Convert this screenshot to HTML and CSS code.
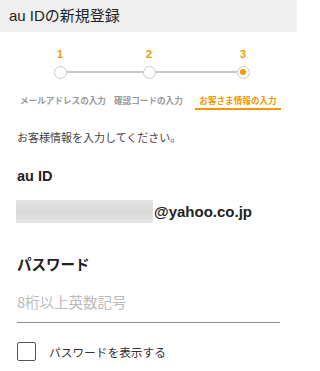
FILE: index.html
```html
<!DOCTYPE html>
<html lang="ja">
<head>
<meta charset="utf-8">
<link rel="stylesheet" href="styles.css">
</head>
<body>
<div class="page">
  <header class="hdr">au IDの新規登録</header>
  <div class="steps">
    <div class="nums">
      <span class="num n1">1</span>
      <span class="num n2">2</span>
      <span class="num n3">3</span>
    </div>
    <div class="track">
      <span class="dot d1"></span>
      <span class="line l1"></span>
      <span class="dot d2"></span>
      <span class="line l2"></span>
      <span class="dot d3 on"></span>
    </div>
    <div class="labels">
      <span class="lab lab1">メールアドレスの入力</span>
      <span class="lab lab2">確認コードの入力</span>
      <span class="lab lab3 act">お客さま情報の入力</span>
    </div>
  </div>
  <p class="intro">お客様情報を入力してください。</p>
  <h2 class="label au">au ID</h2>
  <div class="idrow">
    <span class="blur"></span>
    <span class="domain">@yahoo.co.jp</span>
  </div>
  <h2 class="label pw">パスワード</h2>
  <div class="field">8桁以上英数記号</div>
  <label class="chk"><span class="box"></span><span class="chktext">パスワードを表示する</span></label>
</div>
</body>
</html>
```

FILE: styles.css
```css
* { box-sizing: border-box; margin: 0; padding: 0; }
body {
  margin: 0;
  background: #fff;
  font-family: "Noto Sans CJK JP", "Liberation Sans", sans-serif;
  color: #222;
  width: 299px;
  height: 371px;
  overflow: hidden;
}
.page { width: 299px; }
.hdr {
  width: 297px;
  height: 32px;
  background: #efefef;
  font-family: "Liberation Sans", "Noto Sans CJK JP", sans-serif;
  font-size: 15px;
  line-height: 32px;
  padding-left: 9px;
  color: #222;
}
.steps { padding-top: 14px; }
.nums { position: relative; height: 16px; }
.num {
  position: absolute;
  top: 0;
  width: 20px;
  margin-left: -10px;
  text-align: center;
  font-family: "Liberation Sans", sans-serif;
  font-weight: bold;
  font-size: 11px;
  line-height: 16px;
  color: #f39800;
}
.n1 { left: 60px; }
.n2 { left: 149px; }
.n3 { left: 243px; }
.track {
  display: flex;
  align-items: center;
  margin-left: 54px;
  width: 196px;
  height: 14px;
  margin-top: 3px;
}
.dot {
  width: 13px;
  height: 13px;
  border: 1.5px solid #c8c8c8;
  border-radius: 50%;
  background: #fff;
  flex: none;
  position: relative;
}
.dot.on::after {
  content: "";
  position: absolute;
  left: 2px; top: 2px;
  width: 6px; height: 6px;
  border-radius: 50%;
  background: #f39800;
}
.line { height: 2px; background: #c8c8c8; }
.l1 { width: 76px; }
.l2 { width: 81px; }
.labels {
  position: relative;
  height: 18px;
  margin-top: 14px;
}
.lab {
  position: absolute;
  top: 0;
  font-size: 8.6px;
  line-height: 14px;
  color: #999;
  font-weight: bold;
  white-space: nowrap;
}
.lab1 { left: 20px; }
.lab2 { left: 114px; }
.lab3 {
  left: 195px;
  width: 86px;
  color: #f39800;
  padding-bottom: 1px;
  border-bottom: 2px solid #f39800;
  text-align: center;
}
.intro {
  margin-top: 18px;
  padding-left: 17px;
  font-size: 11px;
  line-height: 16px;
  color: #444;
}
.label {
  font-family: "Liberation Sans", "Noto Sans CJK JP", sans-serif;
  font-weight: bold;
  font-size: 14.5px;
  color: #222;
  padding-left: 17px;
}
.au { margin-top: 21px; line-height: 20px; }
.idrow {
  display: flex;
  align-items: center;
  margin-top: 14px;
  padding-left: 16px;
  height: 23px;
}
.blur {
  width: 137px;
  height: 23px;
  background: linear-gradient(180deg, #e4e4e4 0%, #d9d9d9 50%, #e6e6e6 100%);
  filter: blur(0.6px);
}
.domain {
  font-family: "Liberation Sans", sans-serif;
  font-weight: bold;
  font-size: 15px;
  color: #222;
  margin-left: 1px;
}
.pw {
  margin-top: 31px;
  line-height: 20px;
  font-family: "Noto Sans CJK JP", sans-serif;
  font-size: 14.5px;
}
.field {
  margin: 17px 19px 0 17px;
  height: 32px;
  border-bottom: 1.5px solid #8a8a8a;
  font-size: 14.5px;
  line-height: 22px;
  color: #bbb;
  width: 263px;
}
.chk {
  display: flex;
  align-items: center;
  margin-top: 19px;
  padding-left: 17px;
}
.box {
  width: 19px;
  height: 19px;
  border: 1px solid #555;
  border-radius: 2px;
  flex: none;
}
.chktext {
  margin-left: 13px;
  font-size: 11.7px;
  color: #333;
}
```
